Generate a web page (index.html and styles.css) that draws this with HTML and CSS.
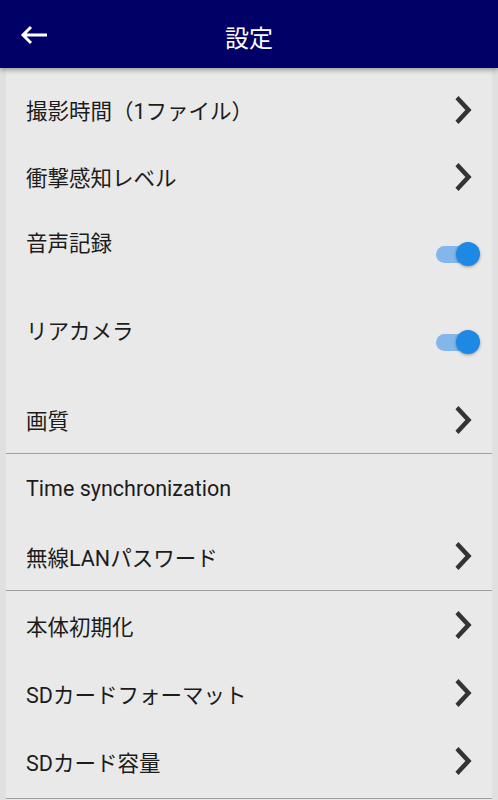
FILE: index.html
```html
<!DOCTYPE html>
<html>
<head>
	<meta charset="utf-8">
	<title>設定</title>
	<link rel="stylesheet" href="styles.css">
</head>
<body>
	<div class="header">
		<svg class="back" width="30" height="20" viewBox="0 0 30 20">
			<path d="M4 10H28M12 2L4 10L12 18" fill="none" stroke="#fff" stroke-width="3"/>
		</svg>
		<h1>設定</h1>
	</div>

	<div class="panel">
		<div class="section first">
			<div class="row"><span class="label">撮影時間（1ファイル）</span><svg class="chevron" viewBox="8.4 6 7.8 12" preserveAspectRatio="none"><path d="M10 6L8.59 7.41 13.17 12l-4.58 4.59L10 18l6-6z"/></svg></div>
			<div class="row"><span class="label">衝撃感知レベル</span><svg class="chevron" viewBox="8.4 6 7.8 12" preserveAspectRatio="none"><path d="M10 6L8.59 7.41 13.17 12l-4.58 4.59L10 18l6-6z"/></svg></div>
			<div class="row switch-row"><span class="label">音声記録</span><span class="switch"><span class="track"></span><span class="thumb"></span></span></div>
			<div class="row switch-row"><span class="label">リアカメラ</span><span class="switch"><span class="track"></span><span class="thumb"></span></span></div>
			<div class="row"><span class="label">画質</span><svg class="chevron" viewBox="8.4 6 7.8 12" preserveAspectRatio="none"><path d="M10 6L8.59 7.41 13.17 12l-4.58 4.59L10 18l6-6z"/></svg></div>
		</div>

		<div class="section second">
			<div class="row"><span class="label">Time synchronization</span></div>
			<div class="row"><span class="label">無線LANパスワード</span><svg class="chevron" viewBox="8.4 6 7.8 12" preserveAspectRatio="none"><path d="M10 6L8.59 7.41 13.17 12l-4.58 4.59L10 18l6-6z"/></svg></div>
		</div>

		<div class="section third">
			<div class="row"><span class="label">本体初期化</span><svg class="chevron" viewBox="8.4 6 7.8 12" preserveAspectRatio="none"><path d="M10 6L8.59 7.41 13.17 12l-4.58 4.59L10 18l6-6z"/></svg></div>
			<div class="row"><span class="label">SDカードフォーマット</span><svg class="chevron" viewBox="8.4 6 7.8 12" preserveAspectRatio="none"><path d="M10 6L8.59 7.41 13.17 12l-4.58 4.59L10 18l6-6z"/></svg></div>
			<div class="row"><span class="label">SDカード容量</span><svg class="chevron" viewBox="8.4 6 7.8 12" preserveAspectRatio="none"><path d="M10 6L8.59 7.41 13.17 12l-4.58 4.59L10 18l6-6z"/></svg></div>
		</div>
	</div>
</body>
</html>
```

FILE: styles.css
```css
body {
	margin: 0;
	font-family: Roboto, "Noto Sans CJK JP", sans-serif;
	background-color: #e0e0e0;
	height: 800px;
	overflow: hidden;
}

.header {
	position: relative;
	z-index: 1;
	height: 68px;
	padding-top: 4px;
	box-sizing: border-box;
	background-color: #000066;
	box-shadow: 0 2px 5px rgba(0, 0, 0, 0.35);
	display: flex;
	align-items: center;
	justify-content: center;
}

.header h1 {
	margin: 0;
	color: #fff;
	font-size: 24px;
	font-weight: normal;
}

.back {
	position: absolute;
	left: 19px;
	top: 25px;
}

.panel {
	margin: 0 6px;
	background-color: #e9e9e9;
	height: 732px;
}

.section {
	border-bottom: 1px solid #9e9e9e;
}

.section.first {
	padding-top: 8px;
}

.section.third {
	padding-bottom: 3px;
}

.row {
	display: flex;
	align-items: center;
	justify-content: space-between;
	padding: 0 20px 0 20px;
	color: #1c1c1c;
	font-size: 21.5px;
}

.first .row { height: 67px; }
.second .row { height: 68px; }
.third .row { height: 68px; }

.first .row.switch-row {
	height: 88px;
	align-items: flex-start;
	padding-right: 12px;
}

.switch-row .label {
	margin-top: 16px;
}

.chevron {
	width: 17px;
	height: 28px;
	fill: #333;
}

.switch {
	position: relative;
	width: 44px;
	height: 24px;
	margin-top: 32px;
}

.track {
	position: absolute;
	left: 0;
	top: 3.5px;
	width: 40px;
	height: 17px;
	border-radius: 9px;
	background-color: #83b6ea;
}

.thumb {
	position: absolute;
	right: 0;
	top: 0;
	width: 24px;
	height: 24px;
	border-radius: 50%;
	background-color: #1e88e5;
	box-shadow: 0 1px 3px rgba(0, 0, 0, 0.35);
}
```
